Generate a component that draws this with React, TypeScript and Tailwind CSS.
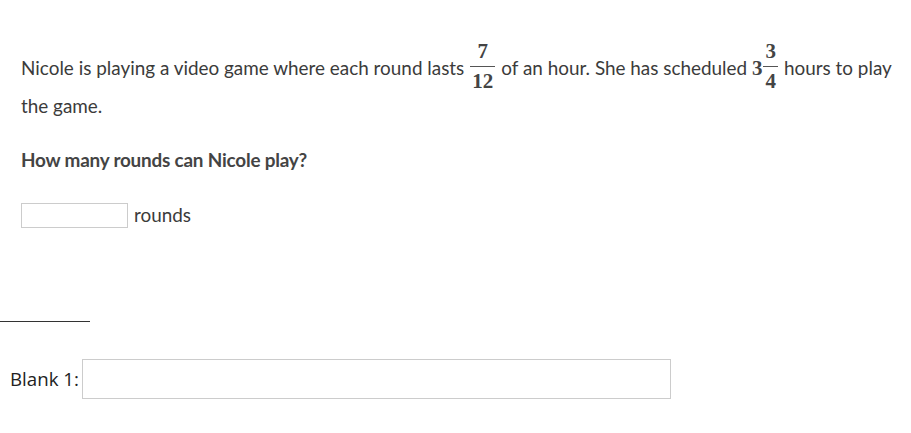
import React from 'react';

function Frac({ n, d, tight }: { n: string; d: string; tight?: boolean }) {
  return (
    <span
      className={`inline-flex flex-col items-center align-middle mt-[-12px] mb-[-4px] mr-[6px] leading-none font-['Liberation_Serif',serif] text-[21px] font-bold text-[#444] ${tight ? 'ml-[1px]' : 'ml-[6px]'}`}
    >
      <span className="px-[2px] pb-[4px]">{n}</span>
      <span className="w-full border-t border-[#555] px-[2px] pt-[4px]">{d}</span>
    </span>
  );
}

export default function App() {
  return (
    <main className="min-h-screen bg-white text-[#3b3b3b]">
      <div className="pl-[21px] pr-2 pt-[50px] font-['Lato',sans-serif] text-[18.9px]">
        <p className="leading-[36px]">
          Nicole is playing a video game where each round lasts
          <Frac n="7" d="12" />
          of an hour. She has scheduled{' '}
          <span className="font-['Liberation_Serif',serif] text-[21px] font-bold text-[#444]">3</span>
          <Frac n="3" d="4" tight />
          hours to play the game.
        </p>

        <p className="mt-[22px] font-bold text-[#444] tracking-[-0.2px]">How many rounds can Nicole play?</p>

        <div className="mt-[27px] flex items-center gap-[6px]">
          <input className="h-[25px] w-[107px] border border-[#ccc] bg-white" />
          <span>rounds</span>
        </div>
      </div>

      <div className="mt-[92px] h-px w-[90px] bg-[#333]" />

      <div className="mt-[37px] flex items-center pl-[10px] font-['Open_Sans',sans-serif] text-[18.7px] text-[#222]">
        <span className="mr-[3px]">Blank 1:</span>
        <input className="h-[40px] w-[589px] border border-[#ccc] bg-white" />
      </div>
    </main>
  );
}
